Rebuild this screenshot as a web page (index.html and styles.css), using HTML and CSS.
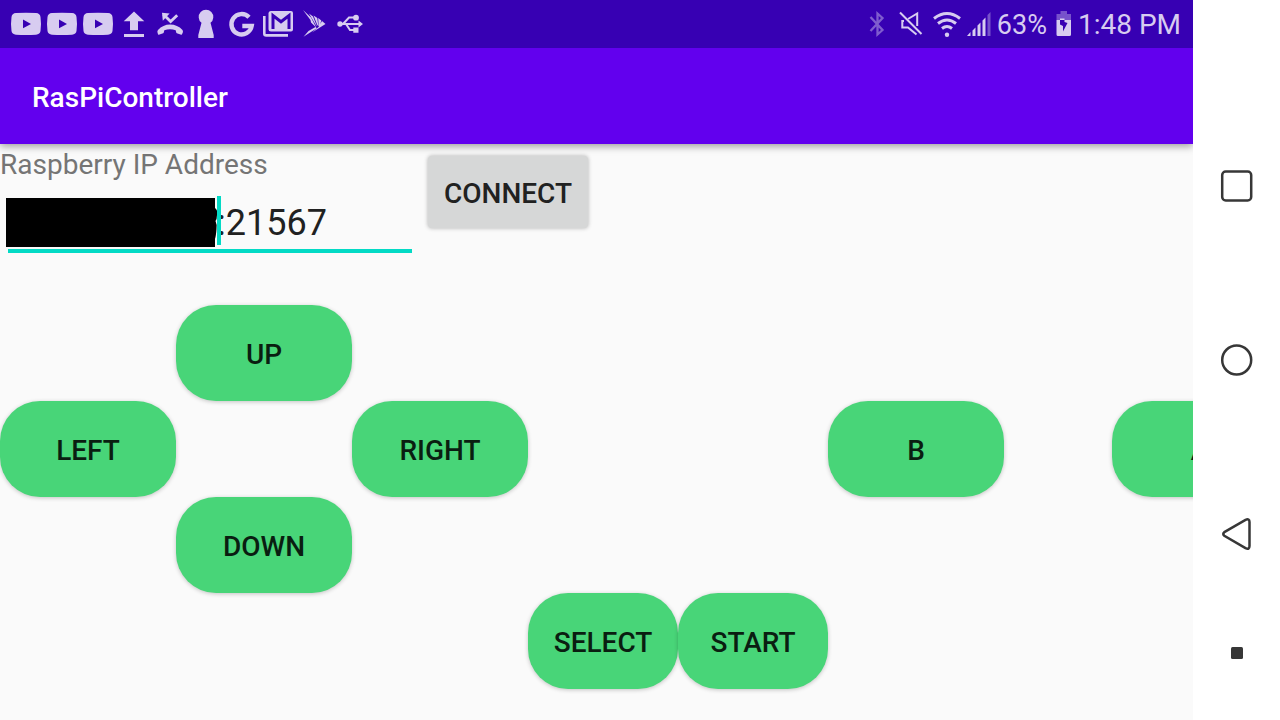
FILE: index.html
```html
<!DOCTYPE html>
<html lang="en">
<head>
<meta charset="utf-8">
<meta name="viewport" content="width=device-width, initial-scale=1">
<title>RasPiController</title>
<link rel="stylesheet" href="styles.css">
</head>
<body>
<div class="screen">
  <div class="app">
    <div class="status">
      <div class="notifications">
        <svg class="slot" viewBox="0 0 36 48"><path fill-rule="evenodd" d="M8 13Q18 12.4 28 13Q32 13.3 32.5 17Q33.5 24 32.5 31Q32 34.400 28 34.700Q18 35.300 8 34.700Q4 34.400 3.500 31Q2.500 24 3.500 17Q4 13.300 8 13ZM15 19.500V28.200L23 24Z"/></svg>
        <svg class="slot" viewBox="0 0 36 48"><path fill-rule="evenodd" d="M8 13Q18 12.4 28 13Q32 13.3 32.5 17Q33.5 24 32.5 31Q32 34.400 28 34.700Q18 35.300 8 34.700Q4 34.400 3.500 31Q2.500 24 3.500 17Q4 13.300 8 13ZM15 19.500V28.200L23 24Z"/></svg>
        <svg class="slot" viewBox="0 0 36 48"><path fill-rule="evenodd" d="M8 13Q18 12.4 28 13Q32 13.3 32.5 17Q33.5 24 32.5 31Q32 34.400 28 34.700Q18 35.300 8 34.700Q4 34.400 3.500 31Q2.500 24 3.500 17Q4 13.300 8 13ZM15 19.500V28.200L23 24Z"/></svg>
        <svg class="slot" viewBox="0 0 36 48"><path d="M18 11.500L28.300 21.300H22V30.300H14V21.300H7.700ZM8 34H28V37H8Z"/></svg>
        <svg class="slot" viewBox="0 0 36 48"><path d="M5.500 32.500Q5 31 6 30Q11 24.500 18 24.500Q25.500 24.500 30.500 30Q31.300 31 30.800 32.500L30 34.200Q29.400 35 28.500 34.600L24.800 33.200Q24 32.700 24 31.500L23.700 30.200Q18 28.400 12.300 30.200L12 31.500Q12 32.700 11.200 33.200L7.500 34.600Q6.600 35 6 34.200Z"/><path d="M11.500 14.500L18.600 21.600L25.200 15.200" fill="none" stroke="currentColor" stroke-width="2.800"/><path d="M10 12.700L17.600 13.400L10.800 20.800Z"/></svg>
        <svg class="slot" viewBox="0 0 36 48"><path d="M13.500 22.800A7.300 7.300 0 1 1 22.500 22.800L25.700 35V38H10.300V35Z"/></svg>
        <svg class="slot" viewBox="0 0 36 48"><path d="M25 17.200A10.200 10.200 0 1 0 27.700 26H18.300" fill="none" stroke="currentColor" stroke-width="4.400"/></svg>
        <svg class="slot" viewBox="0 0 36 48"><path d="M4.300 16V33.500Q4.300 35.400 6.200 35.400H28" fill="none" stroke="currentColor" stroke-width="2.600"/><path d="M11 11H31Q33 11 33 13V29.500Q33 31.500 31 31.500H11Q8.500 31.500 8.500 29V13.500Q8.500 11 11 11Z"/><path class="cut" d="M13 29V15.500L21 21.800L29 15.500V29"/></svg>
        <svg class="slot" viewBox="0 0 36 48"><path d="M7 10L15 17.500L20.200 27.500L15 22.500L14.500 20ZM13 13.500L17 16.500L21 26.500L19.800 25ZM17.500 15.500L21.300 18L22.300 26L21.300 25ZM22.200 18L25.300 20.500L23.500 26.500L22.600 26ZM26 21L29.500 24L16 32.500L22.500 27ZM20.800 28.200L7.500 36.800L12.500 31L19.500 27Z"/></svg>
        <svg class="slot" viewBox="0 0 36 48"><g fill="none" stroke="currentColor" stroke-width="2"><path d="M8 24H27M11 24L17 17.500H22M14 24L18 30H22"/></g><circle cx="8" cy="24" r="2.700"/><circle cx="24" cy="17.700" r="2.900"/><path d="M26.500 20.500L31 24L26.500 27.500ZM21.300 27.500H26.500V32.700H21.300Z"/></svg>
      </div>
      <div class="system">
        <svg class="bluetooth" viewBox="0 0 16 48"><path d="M1.500 17L13.500 30L8.500 34.500V13.500L13.500 18L1.500 31" fill="none" stroke="currentColor" stroke-width="2.300"/></svg>
        <svg class="mute" viewBox="0 0 24 48"><path d="M1 12.500L22.500 34" fill="none" stroke="currentColor" stroke-width="2"/><path d="M9 19L18.200 13.500V26M5 21H3.300V27.500H9L17.500 34.500" fill="none" stroke="currentColor" stroke-width="2"/></svg>
        <svg class="wifi" viewBox="0 0 30 48"><path d="M2 18.500Q15 8.500 28 18.500M6 23.500Q15 16.500 24 23.500M10 28.500Q15 24.500 20 28.500" fill="none" stroke="currentColor" stroke-width="3"/><circle cx="15" cy="34.800" r="2.200"/></svg>
        <svg class="signal" viewBox="0 0 26 48"><path d="M1 36L4.500 32V36ZM6.500 30.500L9.500 27.500V36H6.500ZM11.500 25.500L14.500 22.500V36H11.500ZM16.500 20.500L19.500 17.500V36H16.500Z"/><path opacity=".4" d="M21.500 15L24.500 12V36H21.500Z"/></svg>
        <span class="percent">63%</span>
        <svg class="battery" viewBox="0 0 16 48"><path opacity=".4" d="M4.500 11H11V14H15V20H.5V14H4.500Z"/><path fill-rule="evenodd" d="M.5 20H15V34.500Q15 36 13.500 36H2Q.5 36 .5 34.500ZM4 18.500V24.500L7 26V31.500L11.500 23L8.500 22V18.500Z"/></svg>
        <span class="time">1:48 PM</span>
      </div>
    </div>
    <header class="appbar"><h1>RasPiController</h1></header>
    <main class="content">
      <form class="connection">
        <div class="address">
          <label for="ip">Raspberry IP Address</label>
          <div class="field">
            <input id="ip" type="text" value=":21567">
            <svg class="redaction" viewBox="0 0 212 49" aria-hidden="true"><path d="M0 0H209V10Q212 12 211 17Q211 21 209.500 23Q211 26 210.500 31Q210 38 209 41V49H0Z"/></svg>
            <span class="caret"></span>
          </div>
        </div>
        <button class="connect" type="button">CONNECT</button>
      </form>
      <div class="pad">
        <button class="key up" type="button">UP</button>
        <button class="key left" type="button">LEFT</button>
        <button class="key right" type="button">RIGHT</button>
        <button class="key b" type="button">B</button>
        <button class="key a" type="button">A</button>
        <button class="key down" type="button">DOWN</button>
        <button class="key select" type="button">SELECT</button>
        <button class="key start" type="button">START</button>
      </div>
    </main>
  </div>
  <nav class="navbar">
    <button type="button" aria-label="Recent apps"><svg viewBox="0 0 36 36"><rect x="3.200" y="3.500" width="29" height="29" rx="3.500"/></svg></button>
    <button type="button" aria-label="Home"><svg viewBox="0 0 36 36"><circle cx="17.700" cy="18" r="14.500"/></svg></button>
    <button type="button" aria-label="Back"><svg viewBox="0 0 36 36"><path d="M5.300 16.200L26.500 3.800Q30.500 2.200 30.500 6V30Q30.500 34 26.500 32.200L5.300 19.800Q3.200 18 5.300 16.200Z"/></svg></button>
    <button class="dot" type="button" aria-label="Hide navigation bar"><svg viewBox="0 0 36 36"><rect x="12" y="12" width="12" height="12" rx="1.500"/></svg></button>
  </nav>
</div>
</body>
</html>
```
FILE: styles.css
```css
* {
  box-sizing: border-box;
}

body {
  margin: 0;
  font-family: Roboto, "Noto Sans", sans-serif;
  background: #fff;
}

button,
input {
  font-family: inherit;
  border: 0;
  padding: 0;
}

.screen {
  display: flex;
  min-height: 100vh;
}

.app {
  flex: 1;
  min-width: 0;
  display: flex;
  flex-direction: column;
  overflow: hidden;
  background: #fafafa;
}

.status {
  position: relative;
  z-index: 1;
  display: flex;
  justify-content: space-between;
  height: 48px;
  padding: 0 12px 0 8px;
  background: #3700b3;
  color: #d7ccf0;
}

.status svg {
  display: block;
  height: 48px;
  fill: currentColor;
}

.notifications,
.system {
  display: flex;
  align-items: center;
}

.slot {
  width: 36px;
}

.status .cut {
  fill: none;
  stroke: #3700b3;
  stroke-width: 3;
}

.bluetooth {
  width: 16px;
  margin-right: 14px;
  opacity: 0.45;
}

.mute {
  width: 24px;
  margin-right: 9px;
}

.wifi {
  width: 30px;
  margin-right: 4px;
}

.signal {
  width: 26px;
  margin-right: 5px;
}

.percent {
  padding-top: 2px;
  font-size: 27px;
  line-height: 50px;
}

.battery {
  width: 16px;
  margin: 0 6px 0 9px;
}

.time {
  padding-top: 2px;
  font-size: 28px;
  line-height: 50px;
}

.appbar {
  position: relative;
  display: flex;
  align-items: center;
  height: 96px;
  padding: 2px 32px 0;
  background: #6200ee;
  box-shadow: 0 2px 8px rgba(0, 0, 0, 0.4);
}

.appbar h1 {
  margin: 0;
  font-size: 28px;
  font-weight: 500;
  color: #fff;
}

.content {
  flex: 1;
}

.connection {
  display: flex;
  align-items: flex-start;
  gap: 8px;
  height: 161px;
}

.address {
  width: 420px;
}

.address label {
  display: block;
  font-size: 28px;
  line-height: 42px;
  color: #757575;
}

.field {
  position: relative;
  margin: 2px 8px 0;
}

.field input {
  display: block;
  width: 100%;
  height: 65px;
  padding: 8px 0 0 209px;
  border-bottom: 4px solid #03dac5;
  outline: 0;
  background: transparent;
  font-size: 36px;
  color: #212121;
}

.redaction {
  position: absolute;
  left: -2px;
  top: 10px;
  width: 212px;
  height: 49px;
}

.caret {
  position: absolute;
  left: 209px;
  top: 8px;
  width: 4px;
  height: 49px;
  background: #03dac5;
}

.connect {
  width: 160px;
  height: 72px;
  margin-top: 12px;
  padding-top: 2px;
  border-radius: 4px;
  background: #d6d7d7;
  box-shadow: 0 0 4px rgba(0, 0, 0, 0.3);
  font-size: 28px;
  font-weight: 500;
  color: #212121;
}

.pad {
  display: grid;
  grid-template-columns: repeat(3, 176px) repeat(2, 150px) 176px 108px 176px;
  grid-auto-rows: 96px;
}

.key {
  padding-top: 2px;
  border-radius: 40px;
  background: #48d578;
  box-shadow: 0 1px 4px rgba(0, 0, 0, 0.22);
  font-size: 28px;
  font-weight: 500;
  color: #0a1e11;
}

.up { grid-area: 1 / 2; }
.left { grid-area: 2 / 1; }
.right { grid-area: 2 / 3; }
.b { grid-area: 2 / 6; }
.a { grid-area: 2 / 8; }
.down { grid-area: 3 / 2; }
.select { grid-area: 4 / 4; }
.start { grid-area: 4 / 5; }

.navbar {
  display: flex;
  flex-direction: column;
  align-items: center;
  justify-content: center;
  gap: 138px;
  width: 87px;
  padding-top: 119px;
  background: #fff;
}

.navbar button {
  width: 36px;
  height: 36px;
  background: transparent;
}

.navbar svg {
  display: block;
  width: 36px;
  height: 36px;
  fill: none;
  stroke: #373737;
  stroke-width: 2.5;
}

.navbar .dot {
  margin-top: -55px;
}

.dot rect {
  fill: #373737;
  stroke: none;
}
```
